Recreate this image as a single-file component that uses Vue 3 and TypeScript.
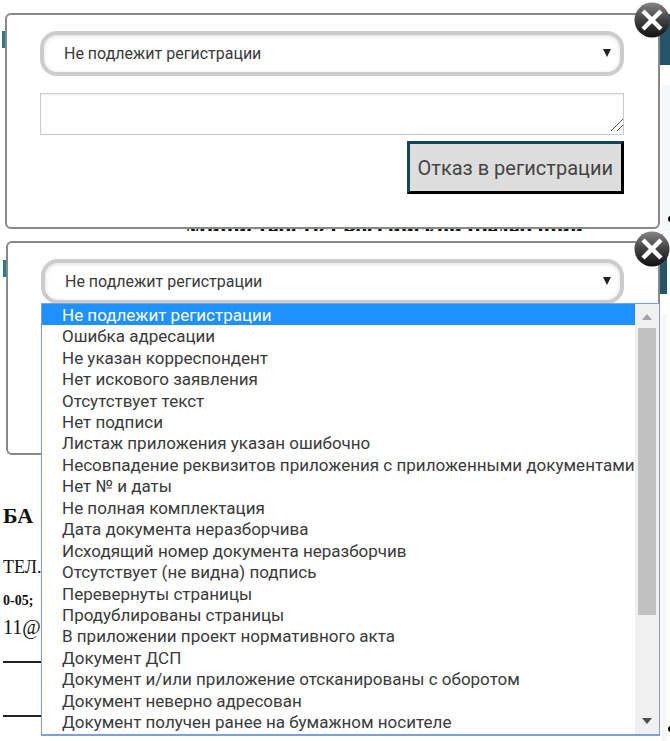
<script setup lang="ts">
import { ref } from 'vue'

const reasons: string[] = [
  'Не подлежит регистрации',
  'Ошибка адресации',
  'Не указан корреспондент',
  'Нет искового заявления',
  'Отсутствует текст',
  'Нет подписи',
  'Листаж приложения указан ошибочно',
  'Несовпадение реквизитов приложения с приложенными документами',
  'Нет № и даты',
  'Не полная комплектация',
  'Дата документа неразборчива',
  'Исходящий номер документа неразборчив',
  'Отсутствует (не видна) подпись',
  'Перевернуты страницы',
  'Продублированы страницы',
  'В приложении проект нормативного акта',
  'Документ ДСП',
  'Документ и/или приложение отсканированы с оборотом',
  'Документ неверно адресован',
  'Документ получен ранее на бумажном носителе',
]

const firstReason = ref<string>(reasons[0])
const secondReason = ref<string>(reasons[0])
const comment = ref<string>('')
</script>

<template>
  <main class="page">
    <section class="scene scene-form">
      <div class="backdrop">
        <span class="tab"></span>
        <span class="header-strip"></span>
        <span class="side-strip"></span>
        <p class="doc-title">Министерства Российской Федерации</p>
        <span class="dot"></span>
      </div>
      <form class="dialog" @submit.prevent>
        <div class="select-wrap">
          <select v-model="firstReason" aria-label="Причина отказа">
            <option v-for="r in reasons" :key="r">{{ r }}</option>
          </select>
          <svg class="arrow" viewBox="0 0 8 8"><path d="M0 0H8L4 8Z" fill="#222" /></svg>
        </div>
        <div class="comment">
          <textarea v-model="comment" aria-label="Комментарий"></textarea>
          <svg class="grip" viewBox="0 0 12 12">
            <path d="M0 12L12 0M6 12L12 6" stroke="#555" fill="none" />
          </svg>
        </div>
        <button class="refuse" type="submit">Отказ в регистрации</button>
      </form>
      <button class="close" type="button" aria-label="Закрыть">
        <svg viewBox="0 0 36 36">
          <defs>
            <linearGradient id="disc-a" x1="0" y1="0" x2="0" y2="1">
              <stop offset="0" stop-color="#858585" />
              <stop offset=".5" stop-color="#424242" />
              <stop offset="1" stop-color="#101010" />
            </linearGradient>
          </defs>
          <circle cx="18" cy="18" r="17.5" fill="url(#disc-a)" />
          <path d="M9 9L27 27M27 9L9 27" stroke="#fff" stroke-width="4.5" />
        </svg>
      </button>
    </section>

    <section class="scene scene-open">
      <div class="backdrop">
        <span class="tab"></span>
        <span class="header-strip"></span>
        <span class="side-strip"></span>
        <div class="doc">
          <p class="doc-head">БА</p>
          <p class="doc-tel">ТЕЛ.</p>
          <p class="doc-num">0-05;</p>
          <p class="doc-mail">11@</p>
          <hr />
          <hr />
        </div>
        <span class="dot"></span>
      </div>
      <div class="dialog">
        <div class="select-wrap">
          <select v-model="secondReason" aria-label="Причина отказа">
            <option v-for="r in reasons" :key="r">{{ r }}</option>
          </select>
          <svg class="arrow" viewBox="0 0 8 8"><path d="M0 0H8L4 8Z" fill="#222" /></svg>
        </div>
      </div>
      <div class="menu">
        <ul class="options" role="listbox" aria-label="Причина отказа">
          <li
            v-for="r in reasons"
            :key="r"
            role="option"
            :aria-selected="r === secondReason"
            :class="{ selected: r === secondReason }"
            @click="secondReason = r"
          >
            {{ r }}
          </li>
        </ul>
        <div class="scrollbar">
          <svg viewBox="0 0 10 6"><path d="M0 6L5 0L10 6Z" fill="#a3a3a3" /></svg>
          <div class="track"><div class="thumb"></div></div>
          <svg viewBox="0 0 10 6"><path d="M0 0L5 6L10 0Z" fill="#4d4d4d" /></svg>
        </div>
      </div>
      <button class="close" type="button" aria-label="Закрыть">
        <svg viewBox="0 0 36 36">
          <defs>
            <linearGradient id="disc-b" x1="0" y1="0" x2="0" y2="1">
              <stop offset="0" stop-color="#858585" />
              <stop offset=".5" stop-color="#424242" />
              <stop offset="1" stop-color="#101010" />
            </linearGradient>
          </defs>
          <circle cx="18" cy="18" r="17.5" fill="url(#disc-b)" />
          <path d="M9 9L27 27M27 9L9 27" stroke="#fff" stroke-width="4.5" />
        </svg>
      </button>
    </section>
  </main>
</template>

<style>
body {
  margin: 0;
  background: #fff;
}
</style>

<style scoped>
* {
  box-sizing: border-box;
}
.page {
  display: flex;
  flex-direction: column;
  min-height: 100vh;
  font-family: Roboto, "Liberation Sans", sans-serif;
  font-size: 16px;
  color: #3a3a3a;
}
.scene {
  position: relative;
  overflow: hidden;
}
.scene-form {
  padding: 13px 10px 2px 5px;
}
.scene-open {
  flex: 1;
  min-height: 510px;
  padding: 12px 10px 5px 6px;
  margin-top: -2px;
}
.backdrop {
  position: absolute;
  inset: 0;
}
.backdrop > span {
  position: absolute;
}
.tab {
  left: 2px;
  top: 31px;
  width: 8px;
  height: 17px;
  background: #2b7a85;
}
.header-strip {
  right: 0;
  top: 14px;
  width: 14px;
  height: 51px;
  background: #245468;
}
.side-strip {
  right: 0;
  top: 85px;
  bottom: 0;
  width: 8px;
  background: #f6f7fa;
}
.dot {
  right: -4px;
  bottom: 9px;
  width: 6px;
  height: 6px;
  border-radius: 50%;
  background: #000;
}
.scene-open .tab {
  left: 3px;
}
.scene-open .header-strip,
.scene-open .side-strip {
  right: 3px;
}
.scene-open .side-strip {
  width: 5px;
}
.doc-title {
  position: absolute;
  left: 185px;
  bottom: -11px;
  margin: 0;
  font: bold 23px/24px "Liberation Serif", serif;
  color: #111;
  white-space: nowrap;
}
.doc {
  position: absolute;
  left: 3px;
  top: 274px;
  width: 40px;
  font-family: "Liberation Serif", serif;
  color: #111;
}
.doc p {
  margin: 0;
  white-space: nowrap;
}
.doc .doc-head {
  font-size: 22px;
  font-weight: bold;
  line-height: 26px;
}
.doc .doc-tel {
  margin-top: 26px;
  font-size: 18px;
  line-height: 24px;
}
.doc .doc-num {
  margin-top: 12px;
  font-size: 14px;
  font-weight: bold;
  line-height: 20px;
}
.doc .doc-mail {
  margin-top: 4px;
  font-size: 20px;
  line-height: 24px;
}
.doc hr {
  margin: 22px 0 0;
  border: 0;
  border-top: 2px solid #222;
}
.doc hr + hr {
  margin-top: 52px;
}
.dialog {
  position: relative;
  display: flex;
  flex-direction: column;
  min-height: 214px;
  padding: 16px 34px 33px 33px;
  border: 2px solid #888;
  border-radius: 6px;
  background: #fff;
}
.select-wrap {
  position: relative;
  display: flex;
}
select {
  flex: 1;
  min-width: 0;
  height: 45px;
  padding: 0 40px 0 20px;
  border: 4px solid #ccc;
  border-radius: 17px;
  background: #fff;
  box-shadow: inset 0 1px 4px #ddd;
  appearance: none;
  font: inherit;
  color: inherit;
}
.arrow {
  position: absolute;
  right: 13px;
  top: 18px;
  width: 8px;
  height: 8px;
  pointer-events: none;
}
.comment {
  position: relative;
  display: flex;
  margin-top: 17px;
}
textarea {
  flex: 1;
  min-width: 0;
  height: 42px;
  padding: 8px;
  border: 1px solid #ccc;
  background: #fff;
  box-shadow: inset 0 1px 2px #eee;
  font: inherit;
  resize: none;
}
.grip {
  position: absolute;
  right: 1px;
  bottom: 4px;
  width: 12px;
  height: 12px;
}
.refuse {
  align-self: flex-end;
  height: 53px;
  margin-top: 6px;
  padding: 0 8px;
  border: 3px solid;
  border-color: #164459 #000 #000 #164459;
  background: #ddd;
  font: 20px Roboto, "Liberation Sans", sans-serif;
  color: #444;
}
.close {
  position: absolute;
  right: 0;
  top: 2px;
  width: 36px;
  height: 36px;
  padding: 0;
  border: 0;
  background: none;
}
.close svg {
  display: block;
}
.menu {
  position: absolute;
  left: 41px;
  right: 10px;
  top: 74px;
  bottom: 5px;
  display: flex;
  border: 1px solid #7f9fd8;
  border-bottom-width: 2px;
  background: #fff;
}
.options {
  flex: 1;
  min-width: 0;
  display: grid;
  grid-auto-rows: 1fr;
  margin: 0;
  padding: 0 0 1px;
  list-style: none;
  font-size: 17px;
}
.options li {
  display: flex;
  align-items: center;
  min-height: 0;
  padding-left: 20px;
  line-height: 20px;
  white-space: nowrap;
}
.options .selected {
  background: #1e90ff;
  color: #fff;
}
.scrollbar {
  display: flex;
  flex-direction: column;
  align-items: center;
  width: 24px;
  padding: 10px 3px;
  background: #f0f0f0;
}
.scrollbar svg {
  width: 10px;
  height: 6px;
}
.track {
  flex: 1;
  width: 18px;
  padding: 8px 0;
}
.thumb {
  height: 75%;
  background: #c1c1c1;
}
</style>
